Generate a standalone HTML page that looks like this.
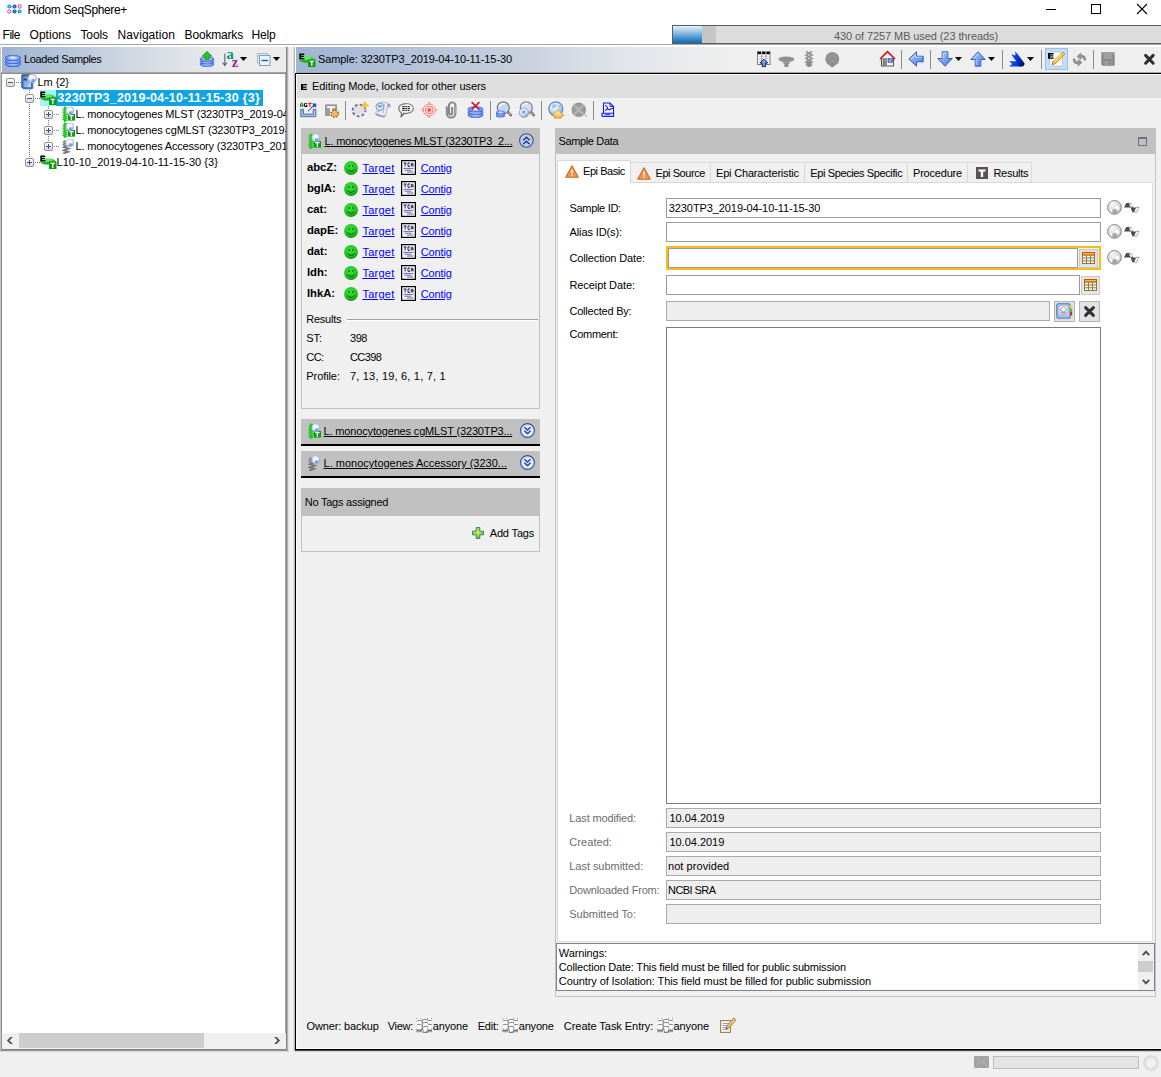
<!DOCTYPE html>
<html><head><meta charset="utf-8"><title>Ridom SeqSphere+</title>
<style>
*{box-sizing:border-box}
html,body{margin:0;padding:0}
body{width:1161px;height:1077px;overflow:hidden;background:#f0f0f0;position:relative;font:11px "Liberation Sans",sans-serif;color:#000}
.a{position:absolute}
.t{position:absolute;white-space:pre;line-height:14px;height:14px;font:11px/14px "Liberation Sans",sans-serif;letter-spacing:-0.12px}
.m{position:absolute;white-space:pre;font:12px/16px "Liberation Sans",sans-serif;top:27px}
.ttl{white-space:pre;font:12px/16px "Liberation Sans",sans-serif}
.b{font-weight:bold}
.lnk{color:#0000ff;text-decoration:underline}
.g{color:#6d6d6d}
.inp{position:absolute;border:1px solid #9a9aa2;background:#fff}
.dis{background:#eeeeee;border-color:#a9a9b1}
svg{position:absolute;overflow:visible}
</style></head><body>
<!-- TITLE BAR -->
<div class="a" style="left:0;top:0;width:1161px;height:47px;background:#fff"></div>
<!-- MENU -->
<div class="a" style="left:0;top:44px;width:1161px;height:1px;background:#a8a8a8"></div>
<!-- MEMORY BAR -->
<div class="a" style="left:672px;top:25px;width:489px;height:19px;background:#dcdcdc;border:1px solid #5c5c5c;border-right:none"></div>
<div class="a" style="left:673px;top:26px;width:29px;height:17px;background:linear-gradient(#e8f2fa,#a4cbe8 30%,#3a8ccc 75%,#0a6ebd)"></div>
<div class="a" style="left:702px;top:26px;width:14px;height:17px;background:#c6c6c6"></div>

<!-- LEFT PANEL -->
<div class="a" style="left:0;top:47px;width:1px;height:1003px;background:#c4c4c4"></div>
<div class="a" style="left:1px;top:47px;width:1px;height:26px;background:#fff"></div>
<div class="a" style="left:1px;top:73px;width:285px;height:976px;background:#fff;border-left:1px solid #8c8c92"></div>
<div class="a" style="left:285px;top:73px;width:1px;height:977px;background:#a4a8ae"></div>
<div class="a" style="left:286px;top:47px;width:1px;height:1004px;background:#7c8088"></div>
<div class="a" style="left:287px;top:47px;width:1px;height:1004px;background:#b4b4b6"></div>
<div class="a" style="left:288px;top:47px;width:1px;height:1004px;background:#e0e0e0"></div>
<div class="a" style="left:1px;top:1049px;width:286px;height:1px;background:#7c8088"></div>
<div class="a" style="left:0;top:1050px;width:288px;height:1px;background:#949aa2"></div>
<div class="a" style="left:0;top:1051px;width:289px;height:1px;background:#d4d4d4"></div>
<div class="a" style="left:2px;top:47px;width:284px;height:25px;background:linear-gradient(90deg,#9db3d3,#d0d8e2 45%,#ececec 80%)"></div>
<div class="a" style="left:1px;top:72px;width:285px;height:1px;background:#a4a4a4"></div>
<div class="a" style="left:1px;top:73px;width:285px;height:1px;background:#8c8c8c"></div>
<!-- tree -->
<div class="a" style="left:40px;top:90px;width:16px;height:16px;background:#a4f4fe"></div>
<div class="a" style="left:56px;top:90px;width:207px;height:16px;background:#10a4e0"></div>
<!-- left scrollbar -->
<div class="a" style="left:2px;top:1033px;width:284px;height:16px;background:#f0f0f0"></div>
<div class="a" style="left:19px;top:1033px;width:185px;height:15px;background:#cdcdcd"></div>

<!-- RIGHT PANEL -->
<div class="a" style="left:293px;top:47px;width:1px;height:1004px;background:#dcdcdc"></div>
<div class="a" style="left:294px;top:47px;width:1px;height:1004px;background:#b8b8b8"></div>
<div class="a" style="left:295px;top:47px;width:1px;height:26px;background:#fff"></div>
<div class="a" style="left:296px;top:47px;width:865px;height:25px;background:linear-gradient(90deg,#9fb5d4,#c6cfdd 25%,#e2e5ea 38%,#efefef 50%)"></div>
<div class="a" style="left:296px;top:72px;width:865px;height:1px;background:#a8a8a8"></div>
<div class="a" style="left:295px;top:73px;width:866px;height:977px;border:1px solid #000;border-right:none;background:#f0f0f0"></div>
<div class="a" style="left:295px;top:1050px;width:866px;height:1px;background:#4a4a4a"></div>
<div class="a" style="left:295px;top:1051px;width:866px;height:1px;background:#cecece"></div>
<div class="a" style="left:296px;top:74px;width:865px;height:1px;background:#fafafa"></div>
<div class="a" style="left:296px;top:74px;width:1px;height:974px;background:#fafafa"></div>
<div class="a" style="left:296px;top:1048px;width:865px;height:1px;background:#fafafa"></div>
<div class="a" style="left:297px;top:75px;width:864px;height:23px;background:#dedede"></div>

<!-- MLST panel -->
<div class="a" style="left:301px;top:128px;width:239px;height:281px;border:1px solid #c0c0c0;background:#f0f0f0"></div>
<div class="a" style="left:301px;top:128px;width:239px;height:25.500px;background:#c0c0c0"></div>
<div id="loci">
</div>
<div class="a" style="left:347px;top:319px;width:191px;height:1px;background:#a0a0a0"></div>
<div class="a" style="left:347px;top:320px;width:191px;height:1px;background:#fff"></div>
<!-- cgMLST -->
<div class="a" style="left:301px;top:419px;width:239px;height:25px;background:#c0c0c0"></div>
<div class="a" style="left:301px;top:444px;width:239px;height:2px;background:#000"></div>
<!-- Accessory -->
<div class="a" style="left:301px;top:451px;width:239px;height:25px;background:#c0c0c0"></div>
<div class="a" style="left:301px;top:476px;width:239px;height:2px;background:#000"></div>
<!-- Tags -->
<div class="a" style="left:301px;top:488px;width:239px;height:64px;border:1px solid #c0c0c0;background:#f0f0f0"></div>
<div class="a" style="left:301px;top:488px;width:239px;height:28px;background:#c0c0c0"></div>

<!-- SAMPLE DATA -->
<div class="a" style="left:555px;top:128px;width:601px;height:869px;border:1px solid #c2c2c2;background:#f0f0f0"></div>
<div class="a" style="left:555px;top:128px;width:601px;height:25.600px;background:#c0c0c0"></div>
<div class="a" style="left:1138px;top:137px;width:9px;height:9px;border:1px solid #6a7088;border-top-width:2px"></div>
<!-- tab content -->
<div class="a" style="left:557px;top:182px;width:596px;height:760px;background:#fff;border:1px solid #dcdcdc"></div>
<!-- tabs -->
<div class="a" style="left:557px;top:160px;width:74px;height:23px;background:#fff;border:1px solid #d9d9d9;border-bottom:none"></div>
<div class="a" style="left:631px;top:162px;width:80px;height:21px;background:#f0f0f0;border:1px solid #d9d9d9;border-left:none"></div>
<div class="a" style="left:711px;top:162px;width:94px;height:21px;background:#f0f0f0;border:1px solid #d9d9d9;border-left:none"></div>
<div class="a" style="left:805px;top:162px;width:103px;height:21px;background:#f0f0f0;border:1px solid #d9d9d9;border-left:none"></div>
<div class="a" style="left:908px;top:162px;width:60px;height:21px;background:#f0f0f0;border:1px solid #d9d9d9;border-left:none"></div>
<div class="a" style="left:968px;top:162px;width:64px;height:21px;background:#f0f0f0;border:1px solid #d9d9d9;border-left:none"></div>
<!-- form -->
<div class="inp" style="left:666px;top:198px;width:435px;height:20px"></div>
<div class="inp" style="left:666px;top:222px;width:435px;height:20px"></div>
<div class="a" style="left:666px;top:246px;width:435px;height:24px;border:2px solid #f8bd14;background:#f2f2f2"></div>
<div class="inp" style="left:668px;top:248px;width:410px;height:20px"></div>
<div class="a" style="left:1079px;top:249px;width:19px;height:19px;background:#e4e4e4;border:1px solid #c6c6c6"></div>
<div class="inp" style="left:666px;top:275px;width:414px;height:20px"></div>
<div class="a" style="left:1081px;top:276px;width:19px;height:19px;background:#e6e6e6;border:1px solid #c8c8c8"></div>
<div class="inp dis" style="left:666px;top:301px;width:384px;height:20px"></div>
<div class="a" style="left:1054px;top:301px;width:21px;height:21px;background:#e2e2e2;border:1px solid #b4b4b4"></div>
<div class="a" style="left:1079px;top:301px;width:21px;height:21px;background:#e2e2e2;border:1px solid #b4b4b4"></div>
<div class="inp" style="left:666px;top:327px;width:435px;height:477px;border-color:#7a7a84"></div>
<div class="inp dis" style="left:666px;top:808px;width:435px;height:20px"></div>
<div class="inp dis" style="left:666px;top:832px;width:435px;height:20px"></div>
<div class="inp dis" style="left:666px;top:856px;width:435px;height:20px"></div>
<div class="inp dis" style="left:666px;top:880px;width:435px;height:20px"></div>
<div class="inp dis" style="left:666px;top:904px;width:435px;height:20px"></div>
<!-- warnings -->
<div class="inp" style="left:556px;top:943px;width:599px;height:48px;border-color:#7c8492"></div>
<div class="a" style="left:1138px;top:944px;width:16px;height:46px;background:#f0f0f0"></div>
<div class="a" style="left:1138px;top:961px;width:15px;height:11px;background:#cdcdcd"></div>
<!-- owner row -->
<!-- status bar -->
<div class="a" style="left:993px;top:1056px;width:146px;height:13px;background:#e4e4e4;border:1px solid #bebebe"></div>
<div class="a" style="left:1143px;top:1055px;width:16px;height:16px;border:3px solid #dedede;border-radius:50%"></div>
<!-- TEXT -->
<div class="a ttl" style="left:27.6px;top:2px;letter-spacing:-0.355px;">Ridom SeqSphere+</div>
<div class="m" style="left:2.6px;letter-spacing:-0.486px;">File</div>
<div class="m" style="left:29.6px;letter-spacing:0.006px;">Options</div>
<div class="m" style="left:80.4px;letter-spacing:-0.083px;">Tools</div>
<div class="m" style="left:117.6px;letter-spacing:0.070px;">Navigation</div>
<div class="m" style="left:184.6px;letter-spacing:-0.181px;">Bookmarks</div>
<div class="m" style="left:251.4px;letter-spacing:-0.122px;">Help</div>
<div class="t" style="left:834px;top:29px;letter-spacing:-0.092px;color:#5a5a5a">430 of 7257 MB used (23 threads)</div>
<div class="t" style="left:24px;top:52px;letter-spacing:-0.362px;">Loaded Samples</div>
<div class="t" style="left:37.5px;top:75px;letter-spacing:-0.052px;">Lm {2}</div>
<div class="t b" style="left:57.3px;top:91px;letter-spacing:0.239px;color:#fff;font-size:12.5px;">3230TP3_2019-04-10-11-15-30 {3}</div>
<div class="t" style="left:56.5px;top:155px;letter-spacing:0.048px;">L10-10_2019-04-10-11-15-30 {3}</div>
<div class="t" style="left:318px;top:52px;letter-spacing:-0.095px;">Sample: 3230TP3_2019-04-10-11-15-30</div>
<div class="t" style="left:312px;top:79px;letter-spacing:-0.058px;">Editing Mode, locked for other users</div>
<div class="t" style="left:324.5px;top:134px;letter-spacing:-0.196px;text-decoration:underline">L. monocytogenes MLST (3230TP3_2...</div>
<div class="t" style="left:323.6px;top:424px;letter-spacing:-0.161px;text-decoration:underline">L. monocytogenes cgMLST (3230TP3...</div>
<div class="t" style="left:323.6px;top:456px;letter-spacing:-0.001px;text-decoration:underline">L. monocytogenes Accessory (3230...</div>
<div class="t b" style="left:306.9px;top:160px;letter-spacing:0.000px;font-size:11.3px;">abcZ:</div>
<div class="t lnk" style="left:362.4px;top:161px;letter-spacing:0.270px;">Target</div>
<div class="t lnk" style="left:420.7px;top:161px;letter-spacing:-0.133px;">Contig</div>
<div class="t b" style="left:306.9px;top:181px;letter-spacing:0.000px;font-size:11.3px;">bglA:</div>
<div class="t lnk" style="left:362.4px;top:182px;letter-spacing:0.270px;">Target</div>
<div class="t lnk" style="left:420.7px;top:182px;letter-spacing:-0.133px;">Contig</div>
<div class="t b" style="left:306.9px;top:202px;letter-spacing:0.000px;font-size:11.3px;">cat:</div>
<div class="t lnk" style="left:362.4px;top:203px;letter-spacing:0.270px;">Target</div>
<div class="t lnk" style="left:420.7px;top:203px;letter-spacing:-0.133px;">Contig</div>
<div class="t b" style="left:306.9px;top:223px;letter-spacing:0.000px;font-size:11.3px;">dapE:</div>
<div class="t lnk" style="left:362.4px;top:224px;letter-spacing:0.270px;">Target</div>
<div class="t lnk" style="left:420.7px;top:224px;letter-spacing:-0.133px;">Contig</div>
<div class="t b" style="left:306.9px;top:244px;letter-spacing:0.000px;font-size:11.3px;">dat:</div>
<div class="t lnk" style="left:362.4px;top:245px;letter-spacing:0.270px;">Target</div>
<div class="t lnk" style="left:420.7px;top:245px;letter-spacing:-0.133px;">Contig</div>
<div class="t b" style="left:306.9px;top:265px;letter-spacing:0.000px;font-size:11.3px;">ldh:</div>
<div class="t lnk" style="left:362.4px;top:266px;letter-spacing:0.270px;">Target</div>
<div class="t lnk" style="left:420.7px;top:266px;letter-spacing:-0.133px;">Contig</div>
<div class="t b" style="left:306.9px;top:286px;letter-spacing:0.000px;font-size:11.3px;">lhkA:</div>
<div class="t lnk" style="left:362.4px;top:287px;letter-spacing:0.270px;">Target</div>
<div class="t lnk" style="left:420.7px;top:287px;letter-spacing:-0.133px;">Contig</div>
<div class="t" style="left:306.3px;top:312px;letter-spacing:-0.255px;">Results</div>
<div class="t" style="left:306.3px;top:331px;letter-spacing:-0.069px;">ST:</div>
<div class="t" style="left:350px;top:331px;letter-spacing:-0.453px;">398</div>
<div class="t" style="left:306.3px;top:350px;letter-spacing:-0.584px;">CC:</div>
<div class="t" style="left:350px;top:350px;letter-spacing:-0.600px;">CC398</div>
<div class="t" style="left:306.3px;top:369px;letter-spacing:-0.081px;">Profile:</div>
<div class="t" style="left:350px;top:369px;letter-spacing:0.194px;">7, 13, 19, 6, 1, 7, 1</div>
<div class="t" style="left:304.7px;top:495px;letter-spacing:-0.234px;">No Tags assigned</div>
<div class="t" style="left:489.7px;top:526px;letter-spacing:-0.146px;">Add Tags</div>
<div class="t" style="left:558.4px;top:134px;letter-spacing:-0.345px;">Sample Data</div>
<div class="t" style="left:583px;top:164px;letter-spacing:-0.440px;">Epi Basic</div>
<div class="t" style="left:655.5px;top:166px;letter-spacing:-0.441px;">Epi Source</div>
<div class="t" style="left:716px;top:166px;letter-spacing:-0.184px;">Epi Characteristic</div>
<div class="t" style="left:810.3px;top:166px;letter-spacing:-0.384px;">Epi Species Specific</div>
<div class="t" style="left:913px;top:166px;letter-spacing:-0.196px;">Procedure</div>
<div class="t" style="left:993.4px;top:166px;letter-spacing:-0.270px;">Results</div>
<div class="t" style="left:569.5px;top:201px;letter-spacing:-0.312px;">Sample ID:</div>
<div class="t" style="left:569.5px;top:225px;letter-spacing:-0.107px;">Alias ID(s):</div>
<div class="t" style="left:569.5px;top:251px;letter-spacing:-0.147px;">Collection Date:</div>
<div class="t" style="left:569.5px;top:278px;letter-spacing:-0.097px;">Receipt Date:</div>
<div class="t" style="left:569.5px;top:304px;letter-spacing:-0.224px;">Collected By:</div>
<div class="t" style="left:569.5px;top:327px;letter-spacing:-0.281px;">Comment:</div>
<div class="t" style="left:668.8px;top:201px;letter-spacing:-0.093px;">3230TP3_2019-04-10-11-15-30</div>
<div class="t g" style="left:569.3px;top:811px;letter-spacing:-0.127px;">Last modified:</div>
<div class="t g" style="left:569.3px;top:835px;letter-spacing:0.062px;">Created:</div>
<div class="t g" style="left:569.3px;top:859px;letter-spacing:-0.046px;">Last submitted:</div>
<div class="t g" style="left:569.3px;top:883px;letter-spacing:-0.171px;">Downloaded From:</div>
<div class="t g" style="left:569.3px;top:907px;letter-spacing:-0.028px;">Submitted To:</div>
<div class="t" style="left:669.4px;top:811px;letter-spacing:-0.016px;">10.04.2019</div>
<div class="t" style="left:669.4px;top:835px;letter-spacing:-0.016px;">10.04.2019</div>
<div class="t" style="left:668px;top:859px;letter-spacing:0.063px;">not provided</div>
<div class="t" style="left:668px;top:883px;letter-spacing:-0.559px;">NCBI SRA</div>
<div class="t" style="left:558.8px;top:946px;letter-spacing:-0.101px;">Warnings:</div>
<div class="t" style="left:558.8px;top:960px;letter-spacing:-0.173px;">Collection Date: This field must be filled for public submission</div>
<div class="t" style="left:558.8px;top:974px;letter-spacing:-0.089px;">Country of Isolation: This field must be filled for public submission</div>
<div class="t" style="left:306.5px;top:1019px;letter-spacing:-0.130px;">Owner: backup</div>
<div class="t" style="left:387.8px;top:1019px;letter-spacing:-0.321px;">View:</div>
<div class="t" style="left:432.7px;top:1019px;letter-spacing:-0.132px;">anyone</div>
<div class="t" style="left:477.7px;top:1019px;letter-spacing:-0.223px;">Edit:</div>
<div class="t" style="left:518.8px;top:1019px;letter-spacing:-0.216px;">anyone</div>
<div class="t" style="left:563.8px;top:1019px;letter-spacing:-0.043px;">Create Task Entry:</div>
<div class="t" style="left:673.5px;top:1019px;letter-spacing:-0.099px;">anyone</div>
<div class="a" style="left:75.500px;top:106px;width:210.500px;height:48px;overflow:hidden">
<div class="t" style="left:0;top:1px;letter-spacing:-0.181px">L. monocytogenes MLST (3230TP3_2019-04-10-11</div>
<div class="t" style="left:0;top:17px;letter-spacing:-0.181px">L. monocytogenes cgMLST (3230TP3_2019-04-10</div>
<div class="t" style="left:0;top:33px;letter-spacing:-0.181px">L. monocytogenes Accessory (3230TP3_2019-04</div>
</div>
<!-- ICON DEFS -->
<svg width="0" height="0" style="position:absolute;left:0;top:0">
<defs>
<radialGradient id="gDb" cx="50%" cy="45%" r="60%"><stop offset="0" stop-color="#ffffff"/><stop offset="0.45" stop-color="#9db8f5"/><stop offset="1" stop-color="#2f5fe6"/></radialGradient>
<radialGradient id="gSm" cx="45%" cy="35%" r="65%"><stop offset="0" stop-color="#3be03b"/><stop offset="0.7" stop-color="#1fc41f"/><stop offset="1" stop-color="#0f8f0f"/></radialGradient>
<radialGradient id="gGl" cx="40%" cy="32%" r="72%"><stop offset="0" stop-color="#ffffff"/><stop offset="0.5" stop-color="#cfe0f4"/><stop offset="1" stop-color="#86a8d6"/></radialGradient>
<radialGradient id="gGg" cx="40%" cy="35%" r="70%"><stop offset="0" stop-color="#f6f6f6"/><stop offset="0.6" stop-color="#dadada"/><stop offset="1" stop-color="#b4b4b4"/></radialGradient>
<linearGradient id="gBox" x1="0" y1="0" x2="0" y2="1"><stop offset="0" stop-color="#ffffff"/><stop offset="1" stop-color="#dcdcdc"/></linearGradient>
<linearGradient id="gArr" x1="0" y1="0" x2="1" y2="1"><stop offset="0" stop-color="#c0d4fa"/><stop offset=".5" stop-color="#7ea4ee"/><stop offset="1" stop-color="#4878e0"/></linearGradient>
<linearGradient id="gRib" x1="0" y1="0" x2="1" y2="1"><stop offset="0" stop-color="#1250ff"/><stop offset=".45" stop-color="#0a38e0"/><stop offset="1" stop-color="#000840"/></linearGradient><linearGradient id="gRib2" x1="0" y1="0" x2="1" y2="0"><stop offset="0" stop-color="#0a48ff"/><stop offset=".6" stop-color="#0a3ce8"/><stop offset="1" stop-color="#001070"/></linearGradient><radialGradient id="gPlus" cx="45%" cy="40%" r="60%"><stop offset="0" stop-color="#dce45a"/><stop offset=".6" stop-color="#a8cc50"/><stop offset="1" stop-color="#58ac58"/></radialGradient><linearGradient id="gHome" x1="0" y1="0" x2="0" y2="1"><stop offset="0" stop-color="#fff0b8"/><stop offset="1" stop-color="#f8bc40"/></linearGradient><linearGradient id="gBook" x1="0" y1="0" x2="1" y2="1"><stop offset="0" stop-color="#6c9cd8"/><stop offset=".6" stop-color="#8cb4e4"/><stop offset="1" stop-color="#dce8f6"/></linearGradient><linearGradient id="gGrn" x1="0" y1="0" x2="0" y2="1"><stop offset="0" stop-color="#5ee85e"/><stop offset="1" stop-color="#109a10"/></linearGradient>
<symbol id="sDb" viewBox="0 0 16 12"><ellipse cx="8" cy="8.9" rx="7.8" ry="2.9" fill="url(#gDb)" stroke="#2a55d8" stroke-width=".6"/><ellipse cx="8" cy="6" rx="7.8" ry="2.9" fill="url(#gDb)" stroke="#2a55d8" stroke-width=".6"/><ellipse cx="8" cy="3.1" rx="7.8" ry="2.9" fill="url(#gDb)" stroke="#2a55d8" stroke-width=".6"/></symbol>
<symbol id="sDd" viewBox="0 0 7 4"><path d="M0 0h7L3.5 4z" fill="#000"/></symbol>
<symbol id="sMinus" viewBox="0 0 9 9"><rect x=".5" y=".5" width="8" height="8" rx="1.5" fill="url(#gBox)" stroke="#919191"/><path d="M2 4.5h5" stroke="#33519c" stroke-width="1"/></symbol>
<symbol id="sPlus" viewBox="0 0 9 9"><rect x=".5" y=".5" width="8" height="8" rx="1.5" fill="url(#gBox)" stroke="#919191"/><path d="M2 4.5h5M4.5 2v5" stroke="#33519c" stroke-width="1"/></symbol>
<symbol id="sET" viewBox="0 0 17 14"><ellipse cx="8" cy="6.4" rx="7.8" ry="3.2" fill="url(#gGrn)"/><ellipse cx="7" cy="5.4" rx="4.5" ry="1.3" fill="#7cf47c" opacity=".7"/><rect x="9" y="6.5" width="7.5" height="7.5" fill="#0a9e0a"/><path d="M10.6 8.4h4.4M12.8 8.4v4.6" stroke="#fff" stroke-width="1.3"/><path d="M.3 .6h5v1.3h-3.3v.9h2.9v1.2h-2.9v1h3.4v1.3h-5.1z" fill="#000"/></symbol>
<symbol id="sGlobe" viewBox="0 0 10 10"><circle cx="5" cy="5" r="4.600" fill="url(#gGl)" stroke="#a4b8d6" stroke-width=".7"/><path d="M4.200 6.200l2.400-.6 1 2.200-2 1.400-1.600-.8z" fill="#6a9ad8" opacity=".85"/><path d="M5.600 2.200l2.200.6.600 2-1.800.6-1.400-1.400z" fill="#fff" opacity=".9"/><path d="M1.800 5.200l1.600-.4.800 1.600-1.400 1z" fill="#fff" opacity=".9"/></symbol>
<symbol id="sMlst" viewBox="0 0 14 16"><path d="M1.800 15.600l2.200-1.200-2.200-1 2.400-1-2.400-1 2.400-1.200-2.400-1 2.400-1-2.400-1.200 2.400-1-2.200-1 2.200-1-2.200-1 2.200-1-2.200-1" fill="none" stroke="#22c822" stroke-width="1.700"/><rect x="5.800" y="8" width="7.200" height="6.600" fill="#0a9e0a"/><path d="M7.200 9.600h4.400M9.400 9.600v4.400" stroke="#fff" stroke-width="1.300"/><use href="#sGlobe" x="3.300" y=".4" width="9" height="8.800"/></symbol>
<symbol id="sAcc" viewBox="0 0 14 16"><path d="M1.600 8.500l1.600-1-1.600-1 1.600-1-1.600-1 1.600-1-1.600-1" fill="none" stroke="#8c8c8c" stroke-width="1.600"/><path d="M1.200 15.600l5-1.800-4.600-1.400 5.200-1.800-4.800-1.400 3-1" fill="none" stroke="#747474" stroke-width="1.700"/><use href="#sGlobe" x="3.300" y=".4" width="9" height="8.800"/></symbol>
<symbol id="sSmile" viewBox="0 0 14 14"><circle cx="7" cy="7" r="6.9" fill="url(#gSm)"/><path d="M5.2 4v2M8.8 4v2" stroke="#0a500a" stroke-width="1"/><path d="M3.4 8.3c1.6 2.7 5.6 2.7 7.2 0" fill="none" stroke="#0a500a" stroke-width="1"/></symbol>
<symbol id="sTca" viewBox="0 0 15 15"><rect x=".6" y=".6" width="13.8" height="13.8" fill="#f4f4f8" stroke="#000" stroke-width="1.2"/><path d="M2.6 3h3M4.1 3v3.4M9 3H7v3.3h2M10.2 6.4V3.6l.9-.6.9.6v2.8M10.2 5h1.8" stroke="#1c2458" stroke-width="1" fill="none"/><path d="M2.5 8.4h10M3.5 10.2h7M6 12h6.5" stroke="#5a5e98" stroke-width=".9"/></symbol>
<symbol id="sUp2" viewBox="0 0 15 15"><circle cx="7.400" cy="7.500" r="6.800" fill="#cbcbcd" stroke="#2a55a8" stroke-width="1.100"/><path d="M4.200 7.200l3.200-3 3.200 3M4.200 11.200l3.200-3 3.200 3" fill="none" stroke="#0c3cc0" stroke-width="1.500"/></symbol>
<symbol id="sDn2" viewBox="0 0 15 15"><circle cx="7.5" cy="7.5" r="6.9" fill="#e4e6f0" stroke="#2a4c9c" stroke-width="1.1"/><path d="M4.4 4.2l3.1 2.8 3.1-2.8M4.4 7.8l3.1 2.8 3.1-2.8" fill="none" stroke="#1c44a8" stroke-width="1.4"/></symbol>
<symbol id="sWarn" viewBox="0 0 14 13"><path d="M7 .8L13.3 12.2H.7z" fill="#f0904a" stroke="#cf6d1e" stroke-width="1.1" stroke-linejoin="round"/><path d="M7 4.4v4.2M7 9.8v1.4" stroke="#fff" stroke-width="1.5"/></symbol>
<symbol id="sGg" viewBox="0 0 15 15"><circle cx="7.500" cy="7.400" r="6.900" fill="url(#gGg)" stroke="#8a8a8a" stroke-width="1"/><path d="M8.200 6.200l3.800-.2.400 2.600-1.800 1.800-.8-1.800-1.600-.2z" fill="#fff"/><path d="M2.600 9.200l2.400.4.800 1.800-1.600 1.200z" fill="#fff"/><path d="M5.500 9.500h4.300v3.800c-1.500.6-3 .5-4.300 0z" fill="#a2a2a2"/><path d="M3.500 3.600c1-1 2.200-1.500 3.500-1.600" stroke="#fff" stroke-width="1" fill="none" opacity=".8"/></symbol>
<symbol id="sHand" viewBox="0 0 16 11"><path d="M0 5.500L2.300 1h2.400l1.900 4.500z" fill="#4c4c4c"/><path d="M4.700 1h1.700l2.600 4.500H6.600z" fill="#fcfcfc" stroke="#3c3c3c" stroke-width=".8" stroke-dasharray=".9 .8"/><path d="M6.600 5.500h5.200L10 10.200H8.400z" fill="#4c4c4c"/><path d="M11.800 5.500l3.200-.5-2.200 5.200h-2.800z" fill="#fcfcfc" stroke="#3c3c3c" stroke-width=".8" stroke-dasharray=".9 .8"/></symbol>
<symbol id="sCal" viewBox="0 0 13 12"><rect x=".5" y=".5" width="12" height="11" fill="#e8fbff" stroke="#9a7030" stroke-width="1"/><rect x=".5" y=".5" width="12" height="2.6" fill="#f08a10" stroke="#b85c08" stroke-width="1"/><path d="M1 1.6h11" stroke="#ffd050" stroke-width=".8"/><path d="M.5 6h12M.5 8.8h12M4.5 3.2v8.3M8.5 3.2v8.3" stroke="#9a7a40" stroke-width="1"/></symbol>
<symbol id="sPpl" viewBox="0 0 16 16"><rect x=".3" y=".6" width="15.700" height="15" fill="#fff"/><g fill="none" stroke="#7e7e7e" stroke-width="1"><path d="M.3 1.400h1M4.300 1.400h1M11.400 1.400h1M15 1.400h1"/><path d="M8 2.300h3.200M1.600 3.400h2.800M12.600 3.400h2.800M8 5.400h3.200M1.600 7.400h2.800M12.400 7.400h3M8 9.400h3.200"/><path d="M.6 4.300l1-.9M4.400 3.400l1.200 1M11.800 4.400l.9-1M15.400 3.400l.6 1M.6 8.300l1-.9M4.400 7.400l1.200 1M11.800 8.400l.8-1M15.400 7.400l.6 1M7 3l1-.7M7 6.200l1-.8M7 10.200l1-.8M11.200 2.300l.6 1.400M11.200 5.400l.6 1.400M11.200 9.400l.8 1.600"/><path d="M6.200 2.200V11l1.200 2.400" stroke-width="1.100"/></g><path d="M.6 11l.8 1.400h3.600l.8-1.400.6 3.200H.3z" fill="#7e7e7e"/><path d="M11.600 11l.6 1.400h3l.6-1.400.2 3.200h-5z" fill="#7e7e7e"/><path d="M.3 14.200h5.500l1.200 1H.3zM10.500 14.200h5.500v1h-6.500z" fill="#8a8a8a"/><path d="M7 13.500l1.200 1.300h2.600l.8-1.300v2.800H7z" fill="#7e7e7e"/></symbol>
</defs></svg>
<!-- ICON PLACEMENTS: title / window -->
<svg style="left:7px;top:4px" width="15" height="10" viewBox="0 0 15 10"><circle cx="2.3" cy="2.5" r="2.1" fill="#12a5ee"/><circle cx="7.5" cy="2.5" r="2.1" fill="#1565b0"/><circle cx="12.6" cy="2.5" r="1.6" fill="#fff" stroke="#f455b4" stroke-width="1.1"/><circle cx="2.3" cy="7.5" r="1.6" fill="#fff" stroke="#f455b4" stroke-width="1.1"/><circle cx="7.5" cy="7.5" r="2.1" fill="#1565b0"/><circle cx="12.6" cy="7.5" r="2.1" fill="#12a5ee"/><path d="M7.500 2.500v5M2.300 2.500h5.200" stroke="#5a9ad0" stroke-width=".6"/><circle cx="2.3" cy="2.5" r=".6" fill="#bfe6fb"/><circle cx="12.6" cy="7.5" r=".6" fill="#bfe6fb"/><circle cx="7.5" cy="2.5" r=".6" fill="#6aa0d8"/><circle cx="7.5" cy="7.5" r=".6" fill="#6aa0d8"/></svg>
<div class="a" style="left:1046px;top:9px;width:10px;height:1px;background:#000"></div>
<div class="a" style="left:1091px;top:4px;width:10px;height:10px;border:1px solid #000"></div>
<svg style="left:1137px;top:4px" width="10" height="10" viewBox="0 0 10 10"><path d="M0 0L10 10M10 0L0 10" stroke="#000" stroke-width="1.1"/></svg>
<!-- left header icons -->
<svg style="left:5px;top:55px" width="16" height="12"><use href="#sDb"/></svg>
<svg style="left:199px;top:51px" width="16" height="16" viewBox="0 0 16 16"><use href="#sDb" x="0" y="5.5" width="16" height="10.500"/><path d="M8 .3L12.800 5.200H10V8.800H6V5.200H3.200z" fill="#2cc02c" stroke="#0d8a0d" stroke-width=".7"/></svg>
<svg style="left:222px;top:51px" width="17" height="17" viewBox="0 0 17 17"><path d="M2.800 2.500V14M.6 11.500L2.800 14.500 5 11.500" fill="none" stroke="#5a6470" stroke-width="1.100"/><text x="4.600" y="7.600" font-family="Liberation Serif" font-weight="bold" font-size="14.500" fill="#0f8f7c">a</text><text x="9.800" y="16" font-family="Liberation Serif" font-weight="bold" font-size="14.500" fill="#8e2a8e">z</text></svg>
<svg style="left:240px;top:57px" width="7" height="4"><use href="#sDd"/></svg>
<svg style="left:257px;top:53px" width="14" height="13" viewBox="0 0 14 13"><rect x=".5" y=".5" width="10" height="9.500" fill="#dcecf6" stroke="#a8b4c8"/><rect x="2.500" y="2.500" width="10.500" height="10" fill="#e6f6fc" stroke="#8c98b8"/><path d="M4.500 7.500h6.500" stroke="#1c5a9c" stroke-width="1.300"/></svg>
<svg style="left:273px;top:57px" width="7" height="4"><use href="#sDd"/></svg>
<!-- tree connectors -->
<svg style="left:0;top:74px" width="90" height="100" viewBox="0 0 90 100"><g stroke="#7c7c7c" stroke-width="1" stroke-dasharray="1 1" fill="none"><path d="M16 8.500h6M35 24.500h5M54 40.500h6M54 56.500h6M54 72.500h6M35 88.500h5"/><path d="M29.500 16v4M29.500 30v55M48.500 32v4M48.500 46v6M48.500 62v6"/></g></svg>
<svg style="left:6px;top:78px" width="9" height="9"><use href="#sMinus"/></svg>
<svg style="left:25px;top:94px" width="9" height="9"><use href="#sMinus"/></svg>
<svg style="left:44px;top:110px" width="9" height="9"><use href="#sPlus"/></svg>
<svg style="left:44px;top:126px" width="9" height="9"><use href="#sPlus"/></svg>
<svg style="left:44px;top:142px" width="9" height="9"><use href="#sPlus"/></svg>
<svg style="left:25px;top:158px" width="9" height="9"><use href="#sPlus"/></svg>
<!-- folder icon -->
<svg style="left:21px;top:74px" width="16" height="16" viewBox="0 0 16 16"><path d="M11.300 7.500h1.800v7h-1.800z" fill="#b4b4b4"/><path d="M12.400 8v6" stroke="#e8e8e8" stroke-width=".6"/><path d="M.8 1h10.400v13.800H2.300L.8 13.300z" fill="#3a70c0" stroke="#2d62b4" stroke-width="1"/><path d="M2.600 2.800h7.400v10.400H2.600z" fill="url(#gBook)"/><path d="M.8 .700h10.800" stroke="#6a6a6a" stroke-width="1.200"/><path d="M3.400 6.600V4.400l1.900 2.200V4.400" stroke="#23345c" stroke-width=".9" fill="none"/><use href="#sGlobe" x="6.500" y="-.3" width="9.500" height="9.500"/></svg>
<!-- sample icons -->
<svg style="left:40px;top:91px" width="17" height="14"><use href="#sET"/></svg>
<svg style="left:40px;top:155px" width="17" height="14"><use href="#sET"/></svg>
<svg style="left:62px;top:106px" width="14" height="16"><use href="#sMlst"/></svg>
<svg style="left:62px;top:122px" width="14" height="16"><use href="#sMlst"/></svg>
<svg style="left:62px;top:138px" width="14" height="16"><use href="#sAcc"/></svg>
<!-- left scrollbar arrows -->
<svg style="left:6px;top:1036px" width="8" height="9" viewBox="0 0 8 9"><path d="M6.900 1H4.400L.9 4.500 4.400 8h2.500L3.500 4.500z" fill="#505050"/></svg>
<svg style="left:273px;top:1036px" width="8" height="9" viewBox="0 0 8 9"><path d="M1.100 1h2.500L7.100 4.500 3.600 8H1.100L4.500 4.500z" fill="#505050"/></svg>
<!-- right header -->
<svg style="left:298.800px;top:52.600px" width="17" height="14"><use href="#sET"/></svg>
<svg style="left:301px;top:84px" width="6" height="6" viewBox="0 0 6 6"><path d="M0 0h6v1.200H2v1.250h3.500v1.200H2v1.150H6V6H0z" fill="#000"/></svg>
<!-- header toolbar -->
<svg style="left:757px;top:51px" width="14" height="16" viewBox="0 0 14 16"><rect x=".5" y=".5" width="12.500" height="13" fill="#fff" stroke="#7a7a7a"/><path d="M.8 1h12v2.200H.8z" fill="#000"/><path d="M4.600 0v3.500M8.900 0v3.500" stroke="#e8e8e8" stroke-width=".9"/><path d="M.5 5.500h12.500M.5 7.600h12.500M.5 9.700h12.500M.5 11.800h12.500" stroke="#c4c4c4" stroke-width=".7"/><path d="M4.600 3v10.500M8.900 3v10.500" stroke="#8a8a8a" stroke-width=".8"/><path d="M6.800 8.200l3.800 3.800H8.400v3.600H5.200V12H3z" fill="#7aa8f0" stroke="#0c1c60" stroke-width="1" stroke-linejoin="round"/></svg>
<svg style="left:778px;top:55px" width="17" height="12" viewBox="0 0 17 12"><ellipse cx="8.400" cy="4.300" rx="8" ry="2.900" fill="#909090"/><path d="M8.400 4.500l4 4h-2V12h-4V8.500h-2z" fill="#8c8c8c"/><path d="M8.400 5.600l2.200 2.200H6.200z" fill="#a0a0a0"/></svg>
<svg style="left:804px;top:51px" width="10" height="16" viewBox="0 0 10 16"><path d="M2 .5L8 4 2 7.500 8 11 2 14.500M8 .5L2 4 8 7.500 2 11 8 14.500" fill="none" stroke="#939393" stroke-width="1.700"/><path d="M5 9.800l3.400 3.400H6.600V16H3.400v-2.800H1.600z" fill="#8c8c8c"/></svg>
<svg style="left:825px;top:52px" width="15" height="15" viewBox="0 0 15 15"><circle cx="7.300" cy="7" r="7" fill="#929292"/><path d="M5 4.200v1.600M9.600 4.200v1.600" stroke="#a6a6a6" stroke-width="1.100"/><path d="M7.300 6.800l3.600 3.600H9V15H5.600v-4.600H3.700z" fill="#8a8a8a"/><path d="M7.300 7.800l2.300 2.400H5z" fill="#a4a4a4"/></svg>
<svg style="left:879px;top:50px" width="17" height="17" viewBox="0 0 17 17"><path d="M2.500 7.500v8.500h12V7.500L8.500 2z" fill="#f4f4f2" stroke="#5a5a5a" stroke-width="1.100"/><path d="M1 9L8.500 1.500 16 9" fill="none" stroke="#e01818" stroke-width="1.500"/><rect x="4" y="8.500" width="3.500" height="7" fill="#8a8a7c" stroke="#5a5a5a" stroke-width=".5"/><rect x="9" y="8.500" width="4.500" height="4" fill="#5a88e0" stroke="#2a4a9a" stroke-width=".6"/><path d="M11.250 8.500v4" stroke="#d0e0ff" stroke-width=".7"/></svg>
<div class="a" style="left:901px;top:50px;width:1px;height:19px;background:#8c8c8c"></div>
<svg style="left:908px;top:51px" width="16" height="16" viewBox="0 0 16 16"><path d="M.8 8L8.500 .8V5.200H15.200V10.800H8.500v4.400z" fill="url(#gArr)" stroke="#3462cc" stroke-width="1" stroke-linejoin="round"/><path d="M3 8l4.500-4.200v2.400h6.500" fill="none" stroke="#d4e2fc" stroke-width=".8"/></svg>
<div class="a" style="left:930px;top:50px;width:1px;height:19px;background:#8c8c8c"></div>
<svg style="left:937px;top:51px" width="16" height="16" viewBox="0 0 16 16"><path d="M8 15.200L.8 7.500H5.200V.8H10.800V7.500h4.400z" fill="url(#gArr)" stroke="#3462cc" stroke-width="1" stroke-linejoin="round"/><path d="M6.200 7V2h3.600" fill="none" stroke="#d4e2fc" stroke-width=".8"/></svg>
<svg style="left:955px;top:57px" width="7" height="4"><use href="#sDd"/></svg>
<svg style="left:970px;top:51px" width="16" height="16" viewBox="0 0 16 16"><path d="M8 .8L15.200 8.500H10.800V15.200H5.200V8.500H.8z" fill="url(#gArr)" stroke="#3462cc" stroke-width="1" stroke-linejoin="round"/><path d="M3.200 7.500L8 2.500M6.200 9v5" fill="none" stroke="#d4e2fc" stroke-width=".8"/></svg>
<svg style="left:988px;top:57px" width="7" height="4"><use href="#sDd"/></svg>
<div class="a" style="left:1002px;top:50px;width:1px;height:19px;background:#8c8c8c"></div>
<svg style="left:1008px;top:51px" width="17" height="16" viewBox="0 0 17 16"><path d="M1.200 10.200H9.500L13.500 15.600H1.200L4.200 12.900z" fill="url(#gRib2)"/><path d="M3.200 3.200L7.400 4.400 7.300.2 16.300 12C17 14 15.500 15.600 13 15.600L11.800 15.200z" fill="url(#gRib)"/></svg>
<svg style="left:1027px;top:57px" width="7" height="4"><use href="#sDd"/></svg>
<div class="a" style="left:1041px;top:50px;width:1px;height:19px;background:#8c8c8c"></div>
<div class="a" style="left:1045px;top:48px;width:23px;height:22px;background:#c5def5;border:1px solid #8ec2f2"></div>
<svg style="left:1047px;top:51px" width="19" height="17" viewBox="0 0 19 17"><rect x="2.600" y=".9" width="12.800" height="14.200" rx="1.200" fill="#fdfdfd" stroke="#b8c0cc" stroke-width=".9"/><path d="M1 2h5.600v1.400H3v.8h3.200v1.300H3v.9h3.700v1.400H1z" fill="#000"/><path d="M15.400 1.700c1-.7 2.600.5 2.200 1.700L8.600 12.400 5.200 13.600l1-3.400z" fill="#f8d040" stroke="#d08820" stroke-width=".9" stroke-linejoin="round"/><path d="M15.400 1.700c1-.7 2.600.5 2.200 1.700l-1 1.100-2.300-1.800z" fill="#f0c0a0" stroke="#d08820" stroke-width=".6"/><path d="M14 3.600L7.200 10.600" stroke="#fff0a0" stroke-width=".9"/><path d="M5.200 13.600l1-3.400 2.400 2.200z" fill="#ecc8a0" stroke="#b87828" stroke-width=".5"/><path d="M5.200 13.600l.4-1.300 1 .9z" fill="#3a2410"/></svg>
<svg style="left:1072px;top:52px" width="15" height="15" viewBox="0 0 15 15"><path d="M14.200 8.600C14.500 5 12.300 2.600 9.200 2.800V.3L4.500 4.400l4.700 3.800V5.700c1.700-.1 2.500 1 2.400 2.900z" fill="#929292"/><path d="M.8 6.400C.5 10 2.700 12.400 5.800 12.200v2.500l4.700-4.100-4.700-3.800v2.500c-1.700.1-2.500-1-2.400-2.900z" fill="#929292"/></svg>
<div class="a" style="left:1093px;top:50px;width:1px;height:19px;background:#8c8c8c"></div>
<svg style="left:1101px;top:52px" width="14" height="14" viewBox="0 0 14 14"><path d="M.3 .3h13.400v13.400H1.300l-1-1z" fill="#8a8a8a"/><rect x="2.500" y=".6" width="9" height="6.400" fill="#a0a0a0"/><rect x="3.500" y="9" width="7.500" height="4.700" fill="#9c9c9c"/><rect x="8" y="9.700" width="2" height="3.300" fill="#848484"/><rect x="12.200" y="1" width=".9" height="1.500" fill="#a8a8a8"/></svg>
<svg style="left:1143px;top:53px" width="13" height="13" viewBox="0 0 13 13"><path d="M2.600 2.400l7.600 7.800M10.200 2.400l-7.600 7.800" stroke="#2e2e2e" stroke-width="3" stroke-linecap="round"/></svg>
<!-- toolbar row -->
<svg style="left:300px;top:102px" width="17" height="16" viewBox="0 0 17 16"><path d="M.8 7.300v7.400h15V7.300h-2.600v4.800H3.400V7.300z" fill="#a6bfe2" stroke="#4a70b2" stroke-width="1"/><path d="M8.200 9L13 4.200" stroke="#23349a" stroke-width="1.100" stroke-dasharray="1.300 .7"/><path d="M11.800 1.600h4.400v4.200l-1.400-1.400-1.200 1-1.200-1.200 1-1.200z" fill="#1c58a8"/><path d="M0 5V2.200L1.300 .8h.8L3.400 2.200V5H2.300V3.800H1.100V5zM1.100 2.900h1.200V2.200H1.100z" fill="#188a18"/><path d="M7 1.700V.9H4.900L4 1.800v2.300l.9.900H7.300V2.700H5.900v.8h.4v.6h-1l-.3-.3V2.200l.3-.4z" fill="#000"/><path d="M8.100 .8h3.500v1.100h-1.200V5H9.300V1.900H8.100z" fill="#ee1c24"/></svg>
<svg style="left:325px;top:104px" width="16" height="15" viewBox="0 0 16 15"><rect x="0" y=".3" width="12" height="11.700" fill="#9a9a9a"/><path d="M2 2.200h8.200v1.900H7.300v7.500H5V4.100H2z" fill="#fff"/><circle cx="9.700" cy="9.700" r="3.500" fill="#f8c630" stroke="#8a5820" stroke-width="1.700" stroke-dasharray="1.500 1.250"/><circle cx="9.700" cy="9.700" r="2.700" fill="#f8c630"/><circle cx="9.700" cy="9.700" r="1.100" fill="#fff" stroke="#8a7a60" stroke-width=".5"/></svg>
<div class="a" style="left:345px;top:101px;width:1px;height:19px;background:#8c8c8c"></div>
<svg style="left:351px;top:101px" width="18" height="17" viewBox="0 0 18 17"><ellipse cx="8" cy="9.500" rx="6.400" ry="5.700" fill="none" stroke="#6c6cac" stroke-width="2" stroke-dasharray="2.800 2.100" stroke-dashoffset="1"/><rect x="3.600" y="6.300" width="9.400" height="6" rx="2.600" fill="#e2e2e6" stroke="#cfcfd6" stroke-width=".6"/><path d="M13.800 .8l1 2.700 2.900 .9-2.900 1-1 2.800-1-2.800-2.900-1 2.900-.9z" fill="#ffd824" stroke="#f09a10" stroke-width=".7" stroke-linejoin="round"/></svg>
<svg style="left:374px;top:101px" width="17" height="17" viewBox="0 0 17 17"><path d="M5.500 1.600C8 .6 11.500 1.200 13.800 2.200c2.200.6 3.400 2.400 2.200 3.800-1 .9-2.400.4-2.600-.8L11.800 14.500c-.3 1.400-1.200 2-2.600 1.800L2.600 14.200C.6 13.400.8 11 2.800 10.600l2.200.4z" fill="#ececf8" stroke="#a6a6c8" stroke-width=".8"/><path d="M2 12.800c2.600 1.600 6.400 2.600 9 2.400" stroke="#8484b0" stroke-width="1.200" fill="none"/><path d="M10.500 2.500l-1.500 10" stroke="#c4c4dc" stroke-width="1.400"/><circle cx="14.600" cy="4.200" r="1.300" fill="#8c8cc0"/><circle cx="5.800" cy="5.800" r="3.900" fill="#bfe6fa" stroke="#8a9ab4" stroke-width="1"/><path d="M4 4l1.800 1.900 2-1.400" stroke="#505868" stroke-width="1" fill="none"/></svg>
<svg style="left:398px;top:103px" width="16" height="14" viewBox="0 0 16 14"><path d="M8 .7c4.200 0 7.300 2 7.300 4.900S12.200 10.500 8 10.500c-.8 0-1.400-.1-2.100-.2L3.200 13.600l.2-3.900C1.600 8.700.7 7.300.7 5.600.7 2.700 3.800.7 8 .7z" fill="#eeeeee" stroke="#666" stroke-width="1.100"/><path d="M8 1.400c3.800 0 6.500 1.800 6.500 4" fill="none" stroke="#fff" stroke-width=".7"/><path d="M4.200 3.700h7.600M4.200 5.500h7.600M4.200 7.300h7.600" stroke="#1c1c1c" stroke-width="1" stroke-dasharray="2.600 .6 1.800 .6"/><path d="M3.300 13.400l2.600-3" stroke="#4a4a4a" stroke-width="1"/></svg>
<svg style="left:421px;top:101px" width="17" height="17" viewBox="0 0 17 17"><circle cx="8.200" cy="9" r="6" fill="#fff4f4" stroke="#f87c7c" stroke-width="1"/><circle cx="8.200" cy="9" r="3.900" fill="#ffe4e4" stroke="#f66a6a" stroke-width="1"/><circle cx="8.200" cy="9" r="2.200" fill="#ff9090"/><circle cx="8.200" cy="9" r="1.200" fill="#f83030"/><path d="M8.200 1v2.400M8.200 14.600V17M0 9h2.400M14 9h2.400" stroke="#f88080" stroke-width="1.200"/></svg>
<svg style="left:445px;top:101px" width="13" height="17" viewBox="0 0 13 17"><path d="M1.800 5.500V12.200a4.300 4.300 0 0 0 8.600 0V4.600a3.200 3.200 0 0 0-6.400 0V11.800a1.600 1.600 0 0 0 3.200 0V6" fill="none" stroke="#5e5e5e" stroke-width="1.900"/><path d="M1.800 5.500V12.200a4.300 4.300 0 0 0 8.600 0V4.600a3.200 3.200 0 0 0-6.400 0V11.800a1.600 1.600 0 0 0 3.200 0V6" fill="none" stroke="#d6d6d6" stroke-width=".6"/></svg>
<svg style="left:467px;top:101px" width="17" height="17" viewBox="0 0 17 17"><use href="#sDb" x="0" y="5.300" width="17" height="11.700"/><path d="M4.600 1.200l7.800 7.400M12.400 1.200L4.600 8.600" stroke="#d01424" stroke-width="1.600"/></svg>
<div class="a" style="left:490px;top:101px;width:1px;height:19px;background:#8c8c8c"></div>
<svg style="left:496px;top:101px" width="17" height="17" viewBox="0 0 17 17"><path d="M11.500 10.500l3.300 3.600" stroke="#6e6e6e" stroke-width="2.600" stroke-linecap="round"/><path d="M12.300 11.400l2.400 2.600" stroke="#e4e4e4" stroke-width=".9"/><circle cx="7.300" cy="6.800" r="6" fill="#c4daf4" stroke="#7e7e7e" stroke-width="1.300"/><path d="M3.400 5.500c.8-2 3-3.200 5.400-2.600" stroke="#fff" stroke-width="1.300" fill="none"/><use href="#sDb" x="0" y="9" width="9" height="8"/></svg>
<svg style="left:519px;top:101px" width="17" height="17" viewBox="0 0 17 17"><path d="M11.500 10.500l3.300 3.600" stroke="#6e6e6e" stroke-width="2.600" stroke-linecap="round"/><path d="M12.300 11.400l2.400 2.600" stroke="#e4e4e4" stroke-width=".9"/><circle cx="7.300" cy="6.800" r="6" fill="#d2e0f4" stroke="#868686" stroke-width="1.300"/><path d="M3.400 5c.8-1.800 3-3 5.400-2.400" stroke="#fff" stroke-width="1.200" fill="none"/><circle cx="5" cy="11.800" r="4.800" fill="url(#gGl)" stroke="#86a2cc" stroke-width=".8"/><path d="M2.600 10.200l2.200-1 1.600 1-.6 2-2.200.6zM6 13.400l1.600-.6.500 1.500-1 1z" fill="#7ea6dc"/></svg>
<div class="a" style="left:541px;top:101px;width:1px;height:19px;background:#8c8c8c"></div>
<svg style="left:548px;top:101px" width="17" height="17" viewBox="0 0 17 17"><circle cx="7.800" cy="7.800" r="7" fill="url(#gGl)" stroke="#5a88c8" stroke-width="1.200"/><path d="M3.600 4.400l3-1.600 2.400 1.400-1.600 2.600-3 .6zM9.600 4.800l3.200-.6 1.200 2.400-2.600 1.200z" fill="#a8c6ea"/><path d="M10 8.800l6.200 5.800h-2.600V17H6.400v-2.400H3.800z" fill="url(#gHome)" stroke="#d08a18" stroke-width=".8" stroke-linejoin="round"/></svg>
<svg style="left:571px;top:102px" width="16" height="16" viewBox="0 0 16 16"><circle cx="7.800" cy="7.800" r="7.300" fill="#9a9a9a"/><path d="M3 3l9.600 9.600M12.600 3L3 12.600" stroke="#b4b4b4" stroke-width="2.400"/><path d="M14 12.500l1.500 2.500" stroke="#b0b0b0" stroke-width="1.200"/></svg>
<div class="a" style="left:593px;top:101px;width:1px;height:19px;background:#8c8c8c"></div>
<svg style="left:601px;top:102px" width="14" height="16" viewBox="0 0 14 16"><path d="M2.500 1h6.500l3.500 3.500V14.500H2.500z" fill="#f6f6ff" stroke="#1414ee" stroke-width="1.100"/><path d="M9 1v3.500h3.500" fill="none" stroke="#1414ee" stroke-width=".9"/><path d="M4.200 3.200c2.600.4 1.400 4.400 3.800 4.600 1.600 0 2.200-1.800 4.200-1.600M4 8.600l3.200-2.400" fill="none" stroke="#1414ee" stroke-width="1.100"/><path d="M1 11.200h11.500v3H1z" fill="#fff" stroke="#1414ee" stroke-width="1.100"/><path d="M3.500 12.700h6" stroke="#1414ee" stroke-width=".9"/></svg>
<!-- MLST panel -->
<svg style="left:308px;top:133px" width="14" height="16"><use href="#sMlst"/></svg>
<svg style="left:519px;top:133px" width="15" height="15"><use href="#sUp2"/></svg>
<svg style="left:308px;top:423px" width="14" height="16"><use href="#sMlst"/></svg>
<svg style="left:520px;top:423px" width="15" height="15"><use href="#sDn2"/></svg>
<svg style="left:308px;top:455px" width="14" height="16"><use href="#sAcc"/></svg>
<svg style="left:520px;top:455px" width="15" height="15"><use href="#sDn2"/></svg>
<svg style="left:344px;top:161px" width="14" height="14"><use href="#sSmile"/></svg><svg style="left:401px;top:160px" width="15" height="15"><use href="#sTca"/></svg>
<svg style="left:344px;top:182px" width="14" height="14"><use href="#sSmile"/></svg><svg style="left:401px;top:181px" width="15" height="15"><use href="#sTca"/></svg>
<svg style="left:344px;top:203px" width="14" height="14"><use href="#sSmile"/></svg><svg style="left:401px;top:202px" width="15" height="15"><use href="#sTca"/></svg>
<svg style="left:344px;top:224px" width="14" height="14"><use href="#sSmile"/></svg><svg style="left:401px;top:223px" width="15" height="15"><use href="#sTca"/></svg>
<svg style="left:344px;top:245px" width="14" height="14"><use href="#sSmile"/></svg><svg style="left:401px;top:244px" width="15" height="15"><use href="#sTca"/></svg>
<svg style="left:344px;top:266px" width="14" height="14"><use href="#sSmile"/></svg><svg style="left:401px;top:265px" width="15" height="15"><use href="#sTca"/></svg>
<svg style="left:344px;top:287px" width="14" height="14"><use href="#sSmile"/></svg><svg style="left:401px;top:286px" width="15" height="15"><use href="#sTca"/></svg>
<svg style="left:472px;top:527px" width="12" height="12" viewBox="0 0 12 12"><path d="M4.200 .5h3.600v3.700h3.700v3.600H7.800v3.700H4.200V7.800H.5V4.200h3.700z" fill="url(#gPlus)" stroke="#2f9058" stroke-width="1"/></svg>
<!-- tabs -->
<svg style="left:565px;top:165px" width="14" height="13"><use href="#sWarn"/></svg>
<svg style="left:637px;top:167px" width="14" height="13"><use href="#sWarn"/></svg>
<svg style="left:976px;top:167px" width="12" height="12" viewBox="0 0 12 12"><rect width="12" height="12" fill="#5c5252"/><path d="M2.500 2.500h7v2H7.200v5.500H4.800V4.500H2.500z" fill="#fff"/></svg>
<!-- form icons -->
<svg style="left:1107px;top:200px" width="15" height="15"><use href="#sGg"/></svg><svg style="left:1124px;top:202px" width="16" height="11"><use href="#sHand"/></svg>
<svg style="left:1107px;top:224px" width="15" height="15"><use href="#sGg"/></svg><svg style="left:1124px;top:226px" width="16" height="11"><use href="#sHand"/></svg>
<svg style="left:1107px;top:250px" width="15" height="15"><use href="#sGg"/></svg><svg style="left:1124px;top:252px" width="16" height="11"><use href="#sHand"/></svg>
<svg style="left:1082px;top:252px" width="13" height="12"><use href="#sCal"/></svg>
<svg style="left:1084px;top:279px" width="13" height="12"><use href="#sCal"/></svg>
<svg style="left:1056px;top:303px" width="17" height="17" viewBox="0 0 17 17"><rect x=".8" y=".8" width="13.400" height="14.400" rx="1.500" fill="#a8c8ee" stroke="#4a78c0" stroke-width="1.100"/><path d="M1.500 14.500h12.500v1.200H2.500z" fill="#e8e8f0" stroke="#4a78c0" stroke-width=".6"/><rect x="3" y="2.500" width="9" height="9.500" fill="#e4e4e8" stroke="#9aa8c0" stroke-width=".5"/><path d="M7.500 4l3.500 3H9.500v1.500h-4V7H4z" fill="#fff" stroke="#8a8a8a" stroke-width=".6"/><path d="M4.500 9.500h6M4.500 11h6" stroke="#8a8a8a" stroke-width=".7"/><rect x="14.200" y="2" width="2" height="3.500" fill="#f8e020"/><rect x="14.200" y="5.500" width="2" height="3.500" fill="#58c020"/><rect x="14.200" y="9" width="2" height="3.500" fill="#e02020"/></svg>
<svg style="left:1083px;top:305px" width="13" height="13" viewBox="0 0 13 13"><path d="M2.600 2.600l7.800 7.800M10.400 2.600l-7.800 7.800" stroke="#303030" stroke-width="3" stroke-linecap="round"/></svg>
<!-- warnings scrollbar arrows -->
<svg style="left:1142px;top:950px" width="8" height="6" viewBox="0 0 8 6"><path d="M.8 5.200L4 1.700 7.200 5.200" fill="none" stroke="#505050" stroke-width="2"/></svg>
<svg style="left:1142px;top:979px" width="8" height="6" viewBox="0 0 8 6"><path d="M.8 .8L4 4.300 7.200 .8" fill="none" stroke="#505050" stroke-width="2"/></svg>
<!-- owner row icons -->
<svg style="left:416px;top:1017px" width="16" height="16"><use href="#sPpl"/></svg>
<svg style="left:502px;top:1017px" width="16" height="16"><use href="#sPpl"/></svg>
<svg style="left:657px;top:1017px" width="16" height="16"><use href="#sPpl"/></svg>
<svg style="left:720px;top:1017px" width="17" height="16" viewBox="0 0 17 16"><rect x=".6" y="3.600" width="9.800" height="11.800" fill="#fafaf4" stroke="#9c8040" stroke-width="1.100"/><path d="M2.500 6.500h6M2.500 8.500h6M2.500 10.500h4M2.500 12.500h5" stroke="#6a8ad0" stroke-width=".8"/><path d="M13.500 .8l2.500 2.200-7 8-3 1 .7-3z" fill="#e0c080" stroke="#9c7c3c" stroke-width=".8"/><path d="M6 12l.4-1.600 1.200 1z" fill="#202020"/></svg>
<!-- status bar envelope -->
<svg style="left:974px;top:1056px" width="15" height="12" viewBox="0 0 14 11" preserveAspectRatio="none"><rect width="14" height="11" rx="1" fill="#a2a2a2"/><path d="M.8 1l6.200 5 6.200-5M.8 10.200l4.500-4.500M13.200 10.200L8.700 5.700" fill="none" stroke="#bcbcbc" stroke-width=".8"/></svg>
</body></html>
